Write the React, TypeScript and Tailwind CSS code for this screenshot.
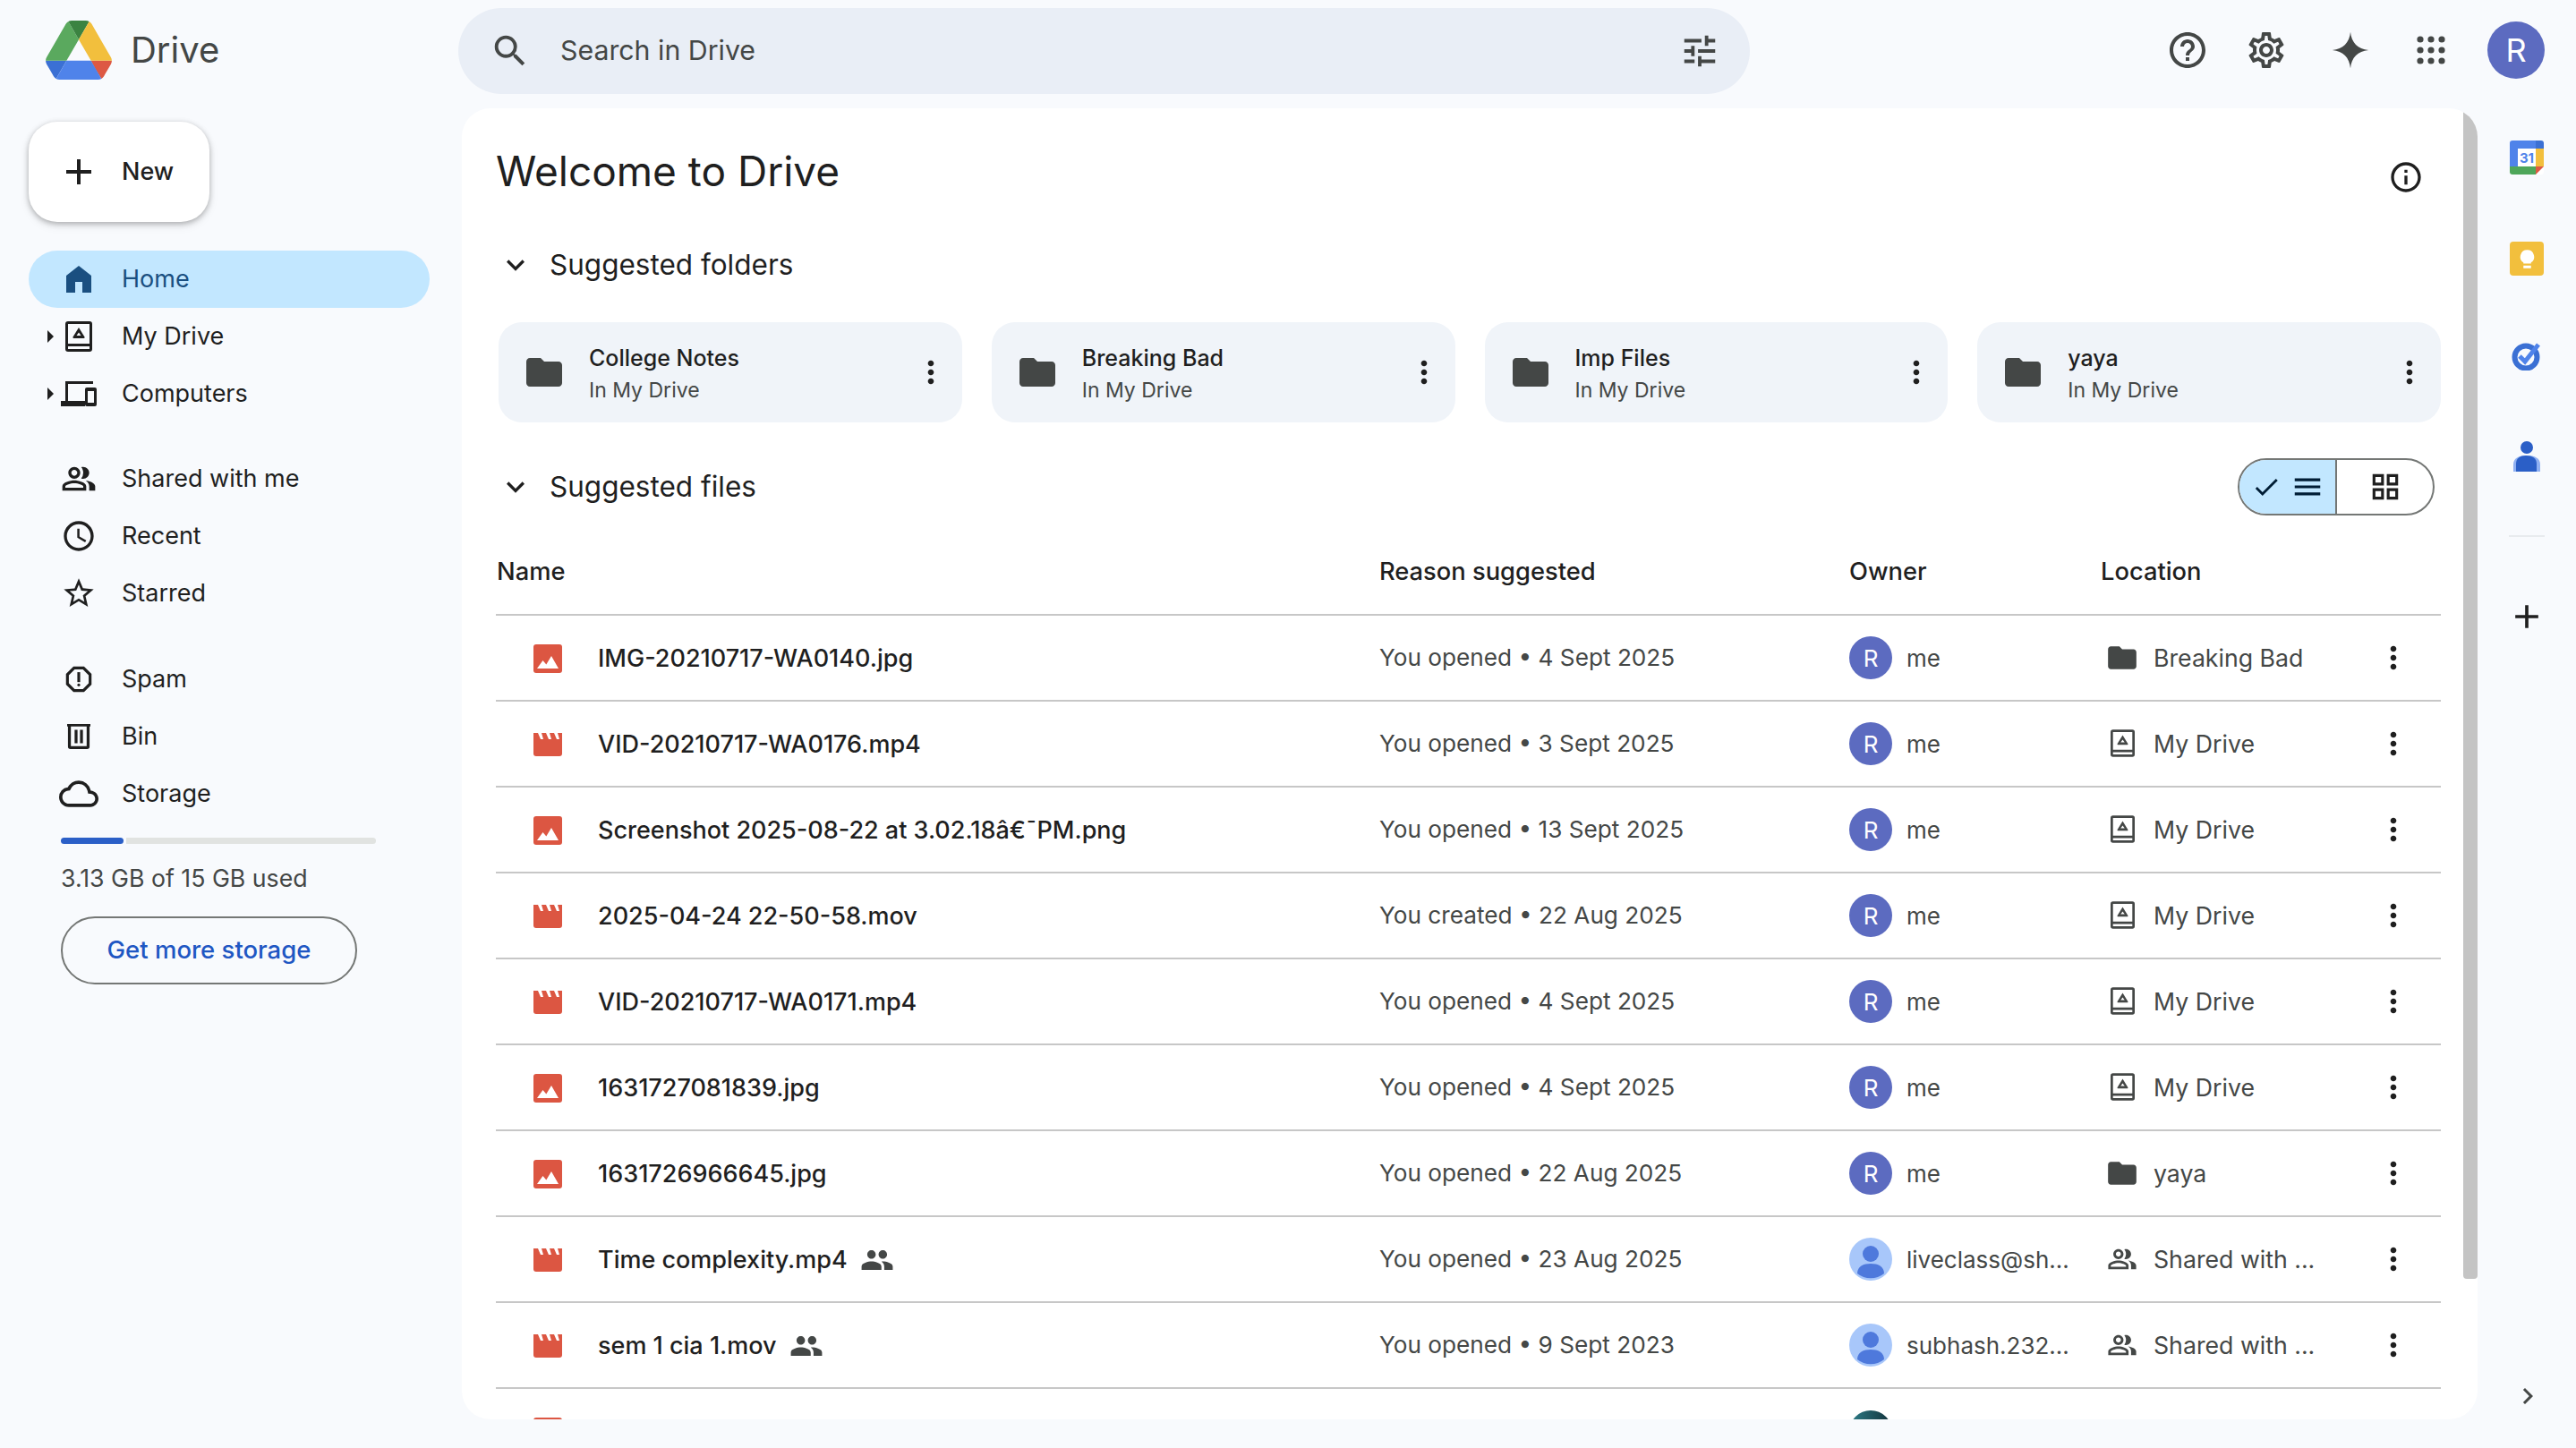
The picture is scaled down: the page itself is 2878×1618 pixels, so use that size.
import { MdSearch, MdTune, MdHelpOutline, MdOutlineSettings, MdAccessTime, MdStarBorder, MdOutlineReport, MdOutlineCloud, MdInfoOutline, MdExpandMore, MdFolder, MdPeople, MdChevronRight, MdAdd, MdCheck, MdMenu, MdOutlineGridView, MdMoreVert } from "react-icons/md";

const SANS = "font-['Inter','Noto_Sans',sans-serif]";

function DriveLogo() {
  return (
    <svg viewBox="0 0 87.3 78" className="w-[74px] h-[66px]">
      <path d="m6.6 66.85 3.85 6.65c.8 1.4 1.95 2.5 3.3 3.3l13.75-23.8h-27.5c0 1.55.4 3.1 1.2 4.5z" fill="#3b70d4" />
      <path d="m43.65 25-13.75-23.8c-1.35.8-2.5 1.9-3.3 3.3l-25.4 44a9.06 9.06 0 0 0 -1.2 4.5h27.5z" fill="#5aa95e" />
      <path d="m73.55 76.8c1.35-.8 2.5-1.9 3.3-3.3l1.6-2.75 7.65-13.25c.8-1.4 1.2-2.95 1.2-4.5h-27.502l5.852 11.5z" fill="#dd5944" />
      <path d="m43.65 25 13.75-23.8c-1.35-.8-2.9-1.2-4.5-1.2h-18.5c-1.6 0-3.15.45-4.5 1.2z" fill="#3b8341" />
      <path d="m59.8 53h-32.3l-13.75 23.8c1.35.8 2.9 1.2 4.5 1.2h50.8c1.6 0 3.15-.45 4.5-1.2z" fill="#4f83ea" />
      <path d="m73.4 26.5-12.7-22c-.8-1.4-1.95-2.5-3.3-3.3l-13.75 23.8 16.15 28h27.45c0-1.55-.4-3.1-1.2-4.5z" fill="#f2bf3d" />
    </svg>
  );
}

function HomeIcon() {
  return (
    <svg viewBox="0 0 28 30" className="w-[28px] h-[30px]" fill="#1a4f80">
      <path d="M0 30V11L14 0l14 11v19H18V18h-8v12z" />
    </svg>
  );
}

function MyDriveIcon({ className }: { className: string }) {
  return (
    <svg viewBox="0 0 30 34" className={className} fill="currentColor">
      <path fillRule="evenodd" d="M3 0h24a3 3 0 0 1 3 3v28a3 3 0 0 1-3 3H3a3 3 0 0 1-3-3V3a3 3 0 0 1 3-3zm0 3v22h24V3zm0 25v3h24v-3z" />
      <path d="M15 7l6.5 10.5a1 1 0 0 1-1 1.5h-11a1 1 0 0 1-1-1.5zm0 5.5L12.5 16h5z" fillRule="evenodd" />
    </svg>
  );
}

function ComputersIcon() {
  return (
    <svg viewBox="0 0 40 28" className="w-[40px] h-[28px]" fill="#1f1f1f">
      <path d="M5 0h31v3H8v19h19v6H0v-6h5z" />
      <path fillRule="evenodd" d="M29 7h9a2 2 0 0 1 2 2v17a2 2 0 0 1-2 2h-9a2 2 0 0 1-2-2V9a2 2 0 0 1 2-2zm1 4v13h7V11z" />
    </svg>
  );
}

function SharedIcon({ className }: { className: string }) {
  return (
    <svg viewBox="0 0 24 24" className={className} fill="currentColor">
      <path d="M15 8c0-1.42-.5-2.73-1.33-3.76.42-.14.86-.24 1.33-.24 2.21 0 4 1.79 4 4s-1.79 4-4 4c-.43 0-.84-.09-1.23-.21-.03-.01-.06-.02-.1-.03A5.98 5.98 0 0 0 15 8zm1.66 5.13C18.03 14.06 19 15.32 19 17v3h4v-3c0-2.18-3.58-3.47-6.34-3.87zM9 6c-1.1 0-2 .9-2 2s.9 2 2 2 2-.9 2-2-.9-2-2-2m0 9c-2.7 0-5.8 1.29-6 2.01V18h12v-1c-.2-.71-3.3-2-6-2M9 4c2.21 0 4 1.79 4 4s-1.79 4-4 4-4-1.79-4-4 1.79-4 4-4zm0 9c2.67 0 8 1.34 8 4v3H1v-3c0-2.66 5.33-4 8-4z" />
    </svg>
  );
}

function BinIcon() {
  return (
    <svg viewBox="0 0 28 30" className="w-[26px] h-[30px]" fill="#1f1f1f">
      <path fillRule="evenodd" d="M0 0h28v3h-1v24a3 3 0 0 1-3 3H4a3 3 0 0 1-3-3V3H0zm4.5 3v23.5h19V3z" />
      <path d="M9 7h3.5v16H9zM15.5 7H19v16h-3.5z" />
    </svg>
  );
}

function ImageIcon() {
  return (
    <svg viewBox="0 0 32 32" className="w-[32px] h-[32px]">
      <rect width="32" height="32" rx="3" fill="#dc5642" />
      <path d="M4 27l6.5-9 3.8 4.5L20 13l8 14z" fill="#fff" />
    </svg>
  );
}

function VideoIcon() {
  return (
    <svg viewBox="0 0 32 26" className="w-[32px] h-[26px]">
      <path d="M0 0h32v23a3 3 0 0 1-3 3H3a3 3 0 0 1-3-3z" fill="#dc5642" />
      <path d="M5 0h4l2 7H8zM14 0h4l2 7h-3zM23 0h4l2 7h-3z" fill="#fff" />
    </svg>
  );
}

function Dots() {
  return <MdMoreVert className="text-[40px] text-[#1f1f1f]" />;
}

function Avatar({ kind }: { kind: "me" | "person" | "teal" }) {
  if (kind === "me") {
    return (
      <div className="w-[48px] h-[48px] rounded-full bg-[#5c6bc0] flex items-center justify-center text-white text-[26px] shrink-0">R</div>
    );
  }
  if (kind === "teal") {
    return <div className="w-[48px] h-[48px] rounded-full bg-gradient-to-r from-[#2f7f8a] to-[#12323a] shrink-0" />;
  }
  return (
    <svg viewBox="0 0 48 48" className="w-[48px] h-[48px] shrink-0">
      <circle cx="24" cy="24" r="24" fill="#a8c7fa" />
      <circle cx="24" cy="18" r="9" fill="#4e79dc" />
      <path d="M9 40c0-8 7-11 15-11s15 3 15 11a24 24 0 0 1-30 0z" fill="#4e79dc" />
    </svg>
  );
}

type NavItem = { label: string; icon: React.ReactNode; caret?: boolean; active?: boolean };

const navGroups: { items: NavItem[]; gap: string }[] = [
  {
    gap: "mb-[31px]",
    items: [
      { label: "Home", icon: <HomeIcon />, active: true },
      { label: "My Drive", icon: <MyDriveIcon className="w-[30px] h-[34px] text-[#1f1f1f]" />, caret: true },
      { label: "Computers", icon: <ComputersIcon />, caret: true },
    ],
  },
  {
    gap: "mb-[32px]",
    items: [
      { label: "Shared with me", icon: <SharedIcon className="w-[40px] h-[40px] text-[#1f1f1f]" /> },
      { label: "Recent", icon: <MdAccessTime className="text-[40px] text-[#1f1f1f]" /> },
      { label: "Starred", icon: <MdStarBorder className="text-[40px] text-[#1f1f1f]" /> },
    ],
  },
  {
    gap: "",
    items: [
      { label: "Spam", icon: <MdOutlineReport className="text-[38px] text-[#1f1f1f]" /> },
      { label: "Bin", icon: <BinIcon /> },
      { label: "Storage", icon: <MdOutlineCloud className="text-[44px] text-[#1f1f1f]" /> },
    ],
  },
];

function Sidebar() {
  return (
    <aside className="w-[516px] shrink-0 pt-[15px]">
      <button className="ml-[32px] w-[202px] h-[112px] rounded-[32px] bg-white shadow-[0_2px_6px_rgba(0,0,0,0.28),0_4px_12px_rgba(0,0,0,0.08)] flex items-center text-[#1f1f1f]">
        <MdAdd className="ml-[32px] text-[48px]" />
        <span className="ml-[24px] text-[27px] font-medium">New</span>
      </button>
      <nav className="mt-[32px] ml-[32px] w-[448px]">
        {navGroups.map((group) => (
          <div key={group.items[0].label} className={group.gap}>
            {group.items.map((item) => (
              <div
                key={item.label}
                className={`flex items-center h-[64px] rounded-full text-[27px] ${item.active ? "bg-[#c2e7ff] text-[#1a4f80]" : "text-[#1f1f1f]"}`}
              >
                <div className="w-[32px] shrink-0 pl-[21px]">
                  {item.caret && <div className="w-0 h-0 border-y-[7px] border-y-transparent border-l-[7px] border-l-[#1f1f1f]" />}
                </div>
                <div className="w-[48px] shrink-0 flex items-center justify-center">{item.icon}</div>
                <span className="ml-[24px]">{item.label}</span>
              </div>
            ))}
          </div>
        ))}
      </nav>
      <div className="ml-[68px] w-[352px] mt-[17px] flex gap-[3px]">
        <div className="w-[70px] h-[7px] rounded-full bg-[#2b5fc7]" />
        <div className="flex-1 h-[7px] rounded-r-full bg-[#e1e3e1]" />
      </div>
      <p className="ml-[68px] mt-[20px] text-[26.7px] text-[#444746] leading-[36px]">3.13 GB of 15 GB used</p>
      <button className="ml-[68px] mt-[25px] w-[331px] h-[76px] rounded-full border-2 border-[#747775] text-[#1f57c3] text-[27.5px] font-medium">
        Get more storage
      </button>
    </aside>
  );
}

function Header() {
  return (
    <header className="h-[121px] shrink-0 flex items-start">
      <div className="w-[512px] shrink-0 flex items-center pl-[51px] pt-[23px]">
        <DriveLogo />
        <span className="ml-[21px] text-[40px] text-[#444746] leading-[66px]">Drive</span>
      </div>
      <div className="mt-[9px] w-[1443px] h-[96px] rounded-full bg-[#e9eef6] flex items-center pl-[35px] pr-[33px]">
        <MdSearch className="text-[46px] text-[#444746]" />
        <span className="ml-[33px] text-[30.3px] text-[#444746] flex-1">Search in Drive</span>
        <MdTune className="text-[46px] text-[#444746]" />
      </div>
      <div className="flex-1 flex items-center h-[112px] pl-[465px]">
        <MdHelpOutline className="text-[48px] text-[#444746] shrink-0" />
        <MdOutlineSettings className="ml-[40px] text-[48px] text-[#444746] shrink-0" />
        <svg viewBox="0 0 24 24" className="ml-[48px] w-[44px] h-[44px] shrink-0" fill="#444746">
          <path d="M12 1C12.6 7.5 16.5 11.4 23 12 16.5 12.6 12.6 16.5 12 23 11.4 16.5 7.5 12.6 1 12 7.5 11.4 11.4 7.5 12 1Z" />
        </svg>
        <svg viewBox="0 0 32 32" className="ml-[52px] w-[32px] h-[32px] shrink-0" fill="#444746">
          <circle cx="4" cy="4" r="3.6" /><circle cx="16" cy="4" r="3.6" /><circle cx="28" cy="4" r="3.6" />
          <circle cx="4" cy="16" r="3.6" /><circle cx="16" cy="16" r="3.6" /><circle cx="28" cy="16" r="3.6" />
          <circle cx="4" cy="28" r="3.6" /><circle cx="16" cy="28" r="3.6" /><circle cx="28" cy="28" r="3.6" />
        </svg>
        <div className="ml-[47px] w-[64px] h-[64px] rounded-full bg-[#5c6bc0] text-white text-[36px] flex items-center justify-center shrink-0">R</div>
      </div>
    </header>
  );
}

const folders = ["College Notes", "Breaking Bad", "Imp Files", "yaya"];

type Row = { name: string; type: "image" | "video"; shared?: boolean; reason: string; owner: string; ownerKind: "me" | "person"; loc: string; locKind: "folder" | "drive" | "shared" };

const rows: Row[] = [
  { name: "IMG-20210717-WA0140.jpg", type: "image", reason: "You opened • 4 Sept 2025", owner: "me", ownerKind: "me", loc: "Breaking Bad", locKind: "folder" },
  { name: "VID-20210717-WA0176.mp4", type: "video", reason: "You opened • 3 Sept 2025", owner: "me", ownerKind: "me", loc: "My Drive", locKind: "drive" },
  { name: "Screenshot 2025-08-22 at 3.02.18â€¯PM.png", type: "image", reason: "You opened • 13 Sept 2025", owner: "me", ownerKind: "me", loc: "My Drive", locKind: "drive" },
  { name: "2025-04-24 22-50-58.mov", type: "video", reason: "You created • 22 Aug 2025", owner: "me", ownerKind: "me", loc: "My Drive", locKind: "drive" },
  { name: "VID-20210717-WA0171.mp4", type: "video", reason: "You opened • 4 Sept 2025", owner: "me", ownerKind: "me", loc: "My Drive", locKind: "drive" },
  { name: "1631727081839.jpg", type: "image", reason: "You opened • 4 Sept 2025", owner: "me", ownerKind: "me", loc: "My Drive", locKind: "drive" },
  { name: "1631726966645.jpg", type: "image", reason: "You opened • 22 Aug 2025", owner: "me", ownerKind: "me", loc: "yaya", locKind: "folder" },
  { name: "Time complexity.mp4", type: "video", shared: true, reason: "You opened • 23 Aug 2025", owner: "liveclass@sh...", ownerKind: "person", loc: "Shared with ...", locKind: "shared" },
  { name: "sem 1 cia 1.mov", type: "video", shared: true, reason: "You opened • 9 Sept 2023", owner: "subhash.232...", ownerKind: "person", loc: "Shared with ...", locKind: "shared" },
];

const GRID = "grid grid-cols-[987px_525px_281px_304px_46px] items-center";

function LocationIcon({ kind }: { kind: Row["locKind"] }) {
  if (kind === "folder") return <MdFolder className="text-[38px] text-[#444746] -mx-[4px]" />;
  if (kind === "drive") return <MyDriveIcon className="w-[27px] h-[31px] text-[#444746]" />;
  return <SharedIcon className="w-[34px] h-[34px] -mx-[2px] text-[#444746]" />;
}

function FileRow({ row }: { row: Row }) {
  return (
    <div className={`${GRID} h-[96px] border-b-2 border-[#c7c7c7]`}>
      <div className="flex items-center pl-[42px] pt-[2px]">
        <div className="w-[32px] flex justify-center">{row.type === "image" ? <ImageIcon /> : <VideoIcon />}</div>
        <span className="ml-[40px] text-[27px] font-medium text-[#1f1f1f] whitespace-nowrap">{row.name}</span>
        {row.shared && <MdPeople className="ml-[14px] text-[38px] text-[#444746]" />}
      </div>
      <div className="text-[26.2px] text-[#444746] whitespace-nowrap">{row.reason}</div>
      <div className="flex items-center gap-[16px] text-[26px] text-[#444746]">
        <Avatar kind={row.ownerKind} />
        <span className="whitespace-nowrap">{row.owner}</span>
      </div>
      <div className="flex items-center pl-[9px] text-[26.7px] text-[#444746]">
        <div className="w-[30px] flex justify-center shrink-0"><LocationIcon kind={row.locKind} /></div>
        <span className="ml-[20px] whitespace-nowrap">{row.loc}</span>
      </div>
      <div className="flex justify-center"><Dots /></div>
    </div>
  );
}

function Main() {
  return (
    <main className="relative w-[2252px] h-[1465px] shrink-0 rounded-[32px] bg-white overflow-hidden pl-[38px] pr-[41px]">
      <div className="absolute right-0 top-[2px] w-[16px] h-[1306px] bg-[#c4c4c4] rounded-b-[8px] rounded-tr-[32px]" />
      <div className="h-[140px] flex items-center justify-between pr-[19px]">
        <h1 className="text-[46px] text-[#1f1f1f] leading-none -mt-[1px]">Welcome to Drive</h1>
        <MdInfoOutline className="text-[40px] text-[#1f1f1f] mt-[14px]" />
      </div>
      <div className="flex items-center h-[68px] pt-[1px]">
        <div className="w-[44px] flex justify-center"><MdExpandMore className="text-[40px] text-[#1f1f1f]" /></div>
        <h2 className="ml-[16px] text-[31.5px] text-[#1f1f1f]">Suggested folders</h2>
      </div>
      <div className="mt-[31px] ml-[3px] grid grid-cols-4 gap-[33px]">
        {folders.map((name) => (
          <div key={name} className="h-[112px] rounded-[26px] bg-[#f0f4f9] flex items-center pl-[31px] pr-[15px]">
            <MdFolder className="text-[48px] text-[#444746] -mx-[4px]" />
            <div className="ml-[30px] flex-1 pt-[4px]">
              <div className="text-[25px] font-medium text-[#1f1f1f] leading-[36px]">{name}</div>
              <div className="text-[23px] text-[#444746] leading-[36px]">In My Drive</div>
            </div>
            <Dots />
          </div>
        ))}
      </div>
      <div className="mt-[41px] flex items-center justify-between h-[62px] pr-[7px]">
        <div className="flex items-center">
          <div className="w-[44px] flex justify-center"><MdExpandMore className="text-[40px] text-[#1f1f1f]" /></div>
          <h2 className="ml-[16px] text-[31.5px] text-[#1f1f1f]">Suggested files</h2>
        </div>
        <div className="flex w-[220px] h-[64px] rounded-full border-2 border-[#747775] overflow-hidden">
          <div className="w-[109px] bg-[#c2e7ff] border-r-2 border-[#747775] flex items-center justify-center gap-[10px] text-[#001d35]">
            <MdCheck className="text-[34px]" />
            <MdMenu className="text-[38px]" />
          </div>
          <div className="flex-1 flex items-center justify-center">
            <MdOutlineGridView className="text-[38px] text-[#1f1f1f]" />
          </div>
        </div>
      </div>
      <div className={`${GRID} h-[96px] mt-[17px] border-b-2 border-[#c7c7c7] text-[27.3px] font-medium text-[#1f1f1f]`}>
        <div className="pl-[1px]">Name</div>
        <div>Reason suggested</div>
        <div>Owner</div>
        <div>Location</div>
      </div>
      {rows.map((row) => (
        <FileRow key={row.name} row={row} />
      ))}
      <div className={`${GRID} h-[96px]`}>
        <div className="pl-[42px]"><ImageIcon /></div>
        <div />
        <Avatar kind="teal" />
      </div>
    </main>
  );
}

function RightRail() {
  return (
    <div className="flex-1 flex flex-col items-center relative">
      <svg viewBox="0 0 38 38" className="mt-[36px] w-[38px] h-[38px]">
        <rect width="38" height="38" rx="3" fill="#fff" />
        <path d="M0 9V3a3 3 0 0 1 3-3h26v9z" fill="#4f83ea" />
        <path d="M0 9h9v20H0z" fill="#4f83ea" />
        <path d="M29 0h6a3 3 0 0 1 3 3v6h-9z" fill="#3b70d4" />
        <path d="M29 9h9v20h-9z" fill="#f2bf3d" />
        <path d="M0 29h29v9H3a3 3 0 0 1-3-3z" fill="#4ea65a" />
        <path d="M29 29h9l-9 9z" fill="#dd5944" />
        <text x="19" y="25" fontSize="15" fontWeight="700" textAnchor="middle" fill="#4f83ea" fontFamily="Inter, sans-serif">31</text>
      </svg>
      <div className="mt-[75px] w-[38px] h-[38px] rounded-[4px] bg-[#f2bf3d] flex items-center justify-center">
        <svg viewBox="0 0 20 24" className="w-[17px] h-[21px]" fill="#fff">
          <path d="M10 0a9 9 0 0 1 5 16.5V18H5v-1.5A9 9 0 0 1 10 0zM5 20.5h10V24H5z" />
        </svg>
      </div>
      <svg viewBox="0 0 36 33" className="mt-[73px] w-[36px] h-[33px]">
        <circle cx="17" cy="18" r="12.5" fill="none" stroke="#3b70d4" strokeWidth="6" />
        <path d="M10 17l6 6 15-19" fill="none" stroke="#4f83ea" strokeWidth="5" />
      </svg>
      <svg viewBox="0 0 30 34" className="mt-[79px] w-[30px] h-[34px]">
        <circle cx="15" cy="7" r="7" fill="#2b5fc7" />
        <path d="M0 34v-8c0-7 6-10 15-10 9 0 15 3 15 10v8z" fill="#8fb0f2" />
        <path d="M3 34v-9c0-6 5-9 11-9 7 0 12 3 12 9v9z" fill="#2b5fc7" />
      </svg>
      <div className="mt-[71px] w-[40px] h-[2px] bg-[#e8ebee]" />
      <MdAdd className="mt-[67px] text-[44px] text-[#1f1f1f]" />
      <MdChevronRight className="absolute bottom-[40px] left-[38px] text-[36px] text-[#444746]" />
    </div>
  );
}

export default function App() {
  return (
    <div className={`w-[2878px] h-[1618px] overflow-hidden bg-[#f8fafd] flex flex-col ${SANS}`}>
      <Header />
      <div className="flex flex-1">
        <Sidebar />
        <Main />
        <RightRail />
      </div>
    </div>
  );
}
